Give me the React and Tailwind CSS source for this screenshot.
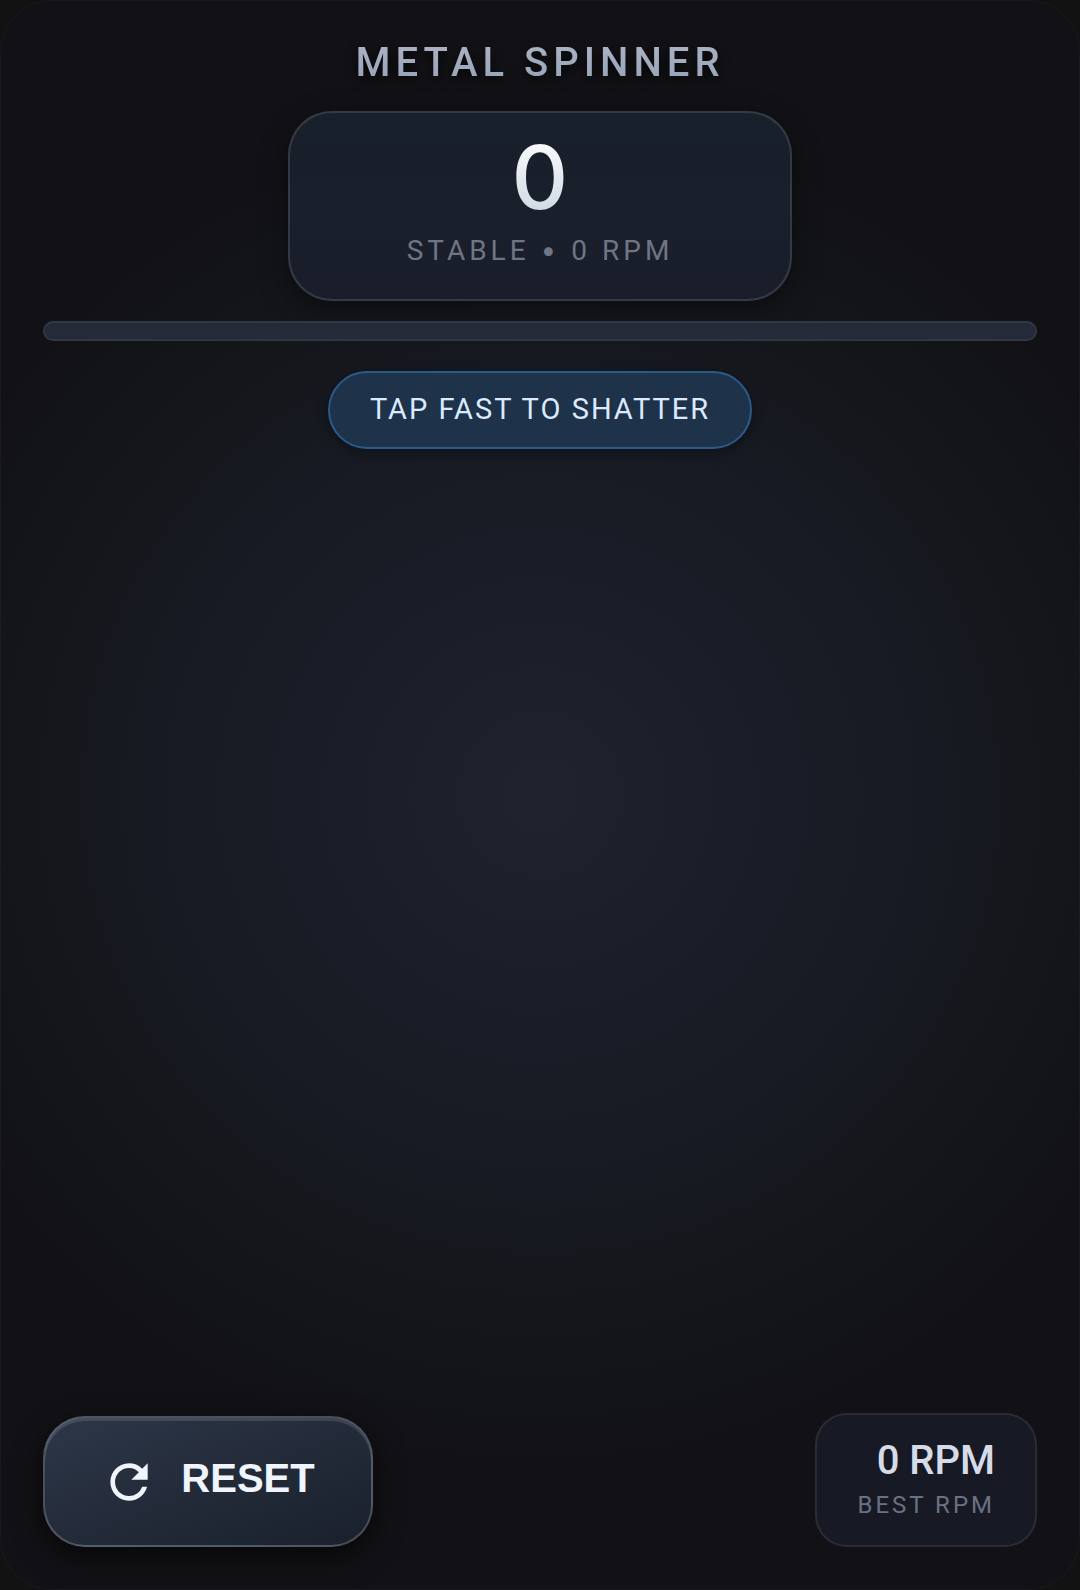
import React, { useState } from "react";
import { MdRefresh } from "react-icons/md";

const MAX_RPM = 5000;

export default function App() {
  const [rpm, setRpm] = useState(0);
  const [best, setBest] = useState(0);

  const spin = () => {
    const next = Math.min(MAX_RPM, rpm + 120);
    setRpm(next);
    setBest(Math.max(best, next));
  };

  return (
    <div className="min-h-screen bg-[#111211] overflow-hidden flex font-['Roboto',sans-serif]">
      <main className="flex-1 flex flex-col items-center rounded-[52px] border border-white/3 bg-[radial-gradient(circle_at_center,#1e232e_0%,#1a1d27_25%,#171a22_40%,#14161a_55%,#121216_70%)] px-[42px] pt-10 pb-[42px]">
        <h1 className="text-[40px] leading-11 font-medium tracking-[5px] bg-linear-to-b from-[#aeb3c4] to-[#94a3b8] bg-clip-text text-transparent drop-shadow-[0_4px_6px_rgba(0,0,0,0.8)]">
          METAL SPINNER
        </h1>

        <section className="mt-[26px] w-[504px] h-[190px] flex flex-col items-center rounded-[44px] border-2 border-white/12 bg-linear-to-b from-[#18202b] to-[#1a1e2b] pt-5 shadow-[0_10px_30px_rgba(0,0,0,0.4)]">
          <div className="text-[88px] leading-[88px] font-medium font-['Inter',sans-serif] bg-linear-to-b from-white to-[#cbd5e1] bg-clip-text text-transparent">
            {rpm}
          </div>
          <div className="mt-2 text-[28px] leading-[42px] tracking-[4px] text-[#6e7685]">
            {rpm > MAX_RPM / 2 ? "UNSTABLE" : "STABLE"} <span className="font-['Inter',sans-serif]">•</span> {rpm} RPM
          </div>
        </section>

        <div className="mt-5 w-full h-5 rounded-full border-2 border-white/6 bg-[#242a37] overflow-hidden">
          <div className="h-full rounded-full bg-sky-400" style={{ width: `${(rpm / MAX_RPM) * 100}%` }} />
        </div>

        <p className="mt-[30px] h-[78px] px-10 flex items-center rounded-full border-2 border-[#2a5a8c] bg-[#1e324a] text-[29px] tracking-[2px] text-[#dbeafe] shadow-[0_4px_12px_rgba(0,0,0,0.3)]">
          TAP FAST TO SHATTER
        </p>

        <button type="button" aria-label="Spin" onClick={spin} className="flex-1 w-full" />

        <footer className="w-full flex items-end justify-between">
          <button
            type="button"
            onClick={() => setRpm(0)}
            className="h-[131px] w-[330px] flex items-center justify-center gap-6 rounded-[42px] border-2 border-white/20 bg-linear-to-br from-[#2d3748] to-[#1a202c] text-[#f0f4fc] shadow-[0_10px_30px_rgba(0,0,0,0.6),inset_0_3px_0_rgba(255,255,255,0.12)]"
          >
            <MdRefresh size={56} />
            <span className="pb-2 font-['Liberation_Sans',sans-serif] font-bold text-[40px] leading-12">RESET</span>
          </button>
          <div className="h-[134px] w-[222px] flex flex-col items-end rounded-[32px] border-2 border-white/8 bg-[#171a25] px-10 pt-[22px]">
            <span className="text-[40px] leading-12 font-medium text-[#d5dce8]">{best} RPM</span>
            <span className="text-2xl leading-10 tracking-[3px] text-[#697282]">BEST RPM</span>
          </div>
        </footer>
      </main>
    </div>
  );
}
